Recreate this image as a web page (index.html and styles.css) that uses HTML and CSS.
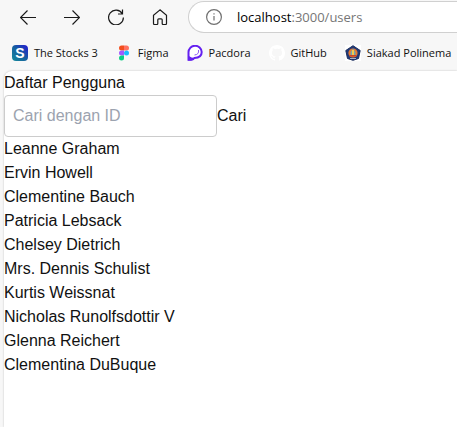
FILE: index.html
```html
<!DOCTYPE html>
<html lang="id">
<head>
<meta charset="utf-8">
<meta name="viewport" content="width=device-width, initial-scale=1">
<title>Daftar Pengguna</title>
<link rel="stylesheet" href="styles.css">
</head>
<body>
<header class="browser">
  <div class="toolbar">
    <nav class="nav-buttons" aria-label="Navigasi">
      <button type="button" class="icon-button" aria-label="Back">
        <svg class="icon" viewBox="0 0 16 16"><path d="M16 8.500H.8M7.500 1.500l-7 7 7 7"/></svg>
      </button>
      <button type="button" class="icon-button" aria-label="Forward">
        <svg class="icon" viewBox="0 0 16 16"><path d="M0 8.500H15.200M8.500 1.500l7 7-7 7"/></svg>
      </button>
      <button type="button" class="icon-button" aria-label="Refresh">
        <svg class="icon" viewBox="0 0 16 16"><path d="M15.400 8.500A7.400 7.400 0 1 1 14.300 4.600M14.500.500v4.500H10"/></svg>
      </button>
      <button type="button" class="icon-button" aria-label="Home">
        <svg class="icon" viewBox="0 0 16 16"><path d="M8 .900 1.500 6.300v8.200q0 1 1 1h2.300q1 0 1-1v-3.700q0-1 1-1h2.400q1 0 1 1v3.700q0 1 1 1h2.300q1 0 1-1V6.300z"/></svg>
      </button>
    </nav>
    <div class="address">
      <svg class="icon info" viewBox="0 0 16 16"><circle cx="8" cy="8" r="7.400"/><path d="M8 7v4.500M8 4.200v1.400"/></svg>
      <span class="url"><span class="host">localhost</span>:3000/users</span>
    </div>
  </div>
  <nav class="bookmarks" aria-label="Bookmark">
    <a class="bookmark" href="#stocks">
      <svg class="favicon" viewBox="0 0 16 16">
        <defs><linearGradient id="stocks" x1="0" y1="1" x2="1" y2="0"><stop offset="0" stop-color="#148b9b"/><stop offset=".5" stop-color="#17609f"/><stop offset="1" stop-color="#2418d4"/></linearGradient></defs>
        <rect width="16" height="16" rx="4" fill="url(#stocks)"/>
        <text class="stocks-letter" x="8" y="13" text-anchor="middle">S</text>
      </svg>
      The Stocks 3
    </a>
    <a class="bookmark" href="#figma">
      <svg class="favicon" viewBox="0 0 16 16">
        <path fill="#f24e1e" d="M8 .500H5.500a2.500 2.500 0 0 0 0 5H8z"/>
        <path fill="#ff7262" d="M8 .500h2.500a2.500 2.500 0 0 1 0 5H8z"/>
        <path fill="#a259ff" d="M8 5.500H5.500a2.500 2.500 0 0 0 0 5H8z"/>
        <circle fill="#1abcfe" cx="10.500" cy="8" r="2.500"/>
        <path fill="#0acf83" d="M8 10.500H5.500A2.500 2.500 0 1 0 8 13z"/>
      </svg>
      Figma
    </a>
    <a class="bookmark" href="#pacdora">
      <svg class="favicon" viewBox="0 0 16 16">
        <path fill="#fff" stroke="#6420f0" stroke-width="2" d="M1.500 14.800V7.500A6.600 6.500 0 0 1 14.700 7C14.700 10.800 11.500 12.800 7.500 12.900Q6.500 14.800 4 14.800z"/>
        <path fill="#6420f0" d="M1 15.500V10.500L4.500 12.500l3.500.500q-1.200 2.500-3.700 2.500z"/>
        <path fill="none" stroke="#8c58f5" d="M11.500 5Q12.300 9.500 7.500 10"/>
      </svg>
      Pacdora
    </a>
    <a class="bookmark" href="#github">
      <svg class="favicon" viewBox="0 0 16 16">
        <path fill="#fff" d="M8 0C3.580 0 0 3.580 0 8c0 3.540 2.290 6.530 5.470 7.590.4.070.55-.17.55-.38 0-.19-.01-.82-.01-1.490-2.010.37-2.530-.49-2.690-.94-.09-.23-.48-.94-.82-1.130-.28-.15-.68-.52-.01-.53.63-.01 1.080.58 1.230.82.72 1.210 1.870.87 2.330.66.07-.52.28-.87.51-1.070-1.780-.2-3.640-.89-3.640-3.950 0-.87.31-1.590.82-2.150-.08-.2-.36-1.020.08-2.120 0 0 .67-.21 2.200.82A7.600 7.600 0 0 1 8 3.860c.68 0 1.360.09 2 .27 1.530-1.040 2.200-.82 2.200-.82.44 1.100.16 1.920.08 2.120.51.56.82 1.270.82 2.150 0 3.070-1.870 3.750-3.650 3.950.29.25.54.73.54 1.480 0 1.070-.01 1.930-.01 2.200 0 .21.15.46.55.38A8.010 8.010 0 0 0 16 8c0-4.420-3.580-8-8-8z"/>
      </svg>
      GitHub
    </a>
    <a class="bookmark" href="#siakad">
      <svg class="favicon" viewBox="0 0 16 16">
        <rect width="16" height="16" fill="#fff"/>
        <path fill="#203a78" stroke="#192b5c" stroke-linejoin="round" d="M8 .700 15.200 5.500 13.500 13.500 8 15.300 2.500 13.500.800 5.500z"/>
        <circle cx="8" cy="8" r="4.600" fill="#e8792d"/>
        <path fill="#76a5ad" d="M8 3.500 10.500 7v3h-5V7z"/>
        <path fill="#f5c94b" d="M7 5h2v5H7z"/>
        <path fill="#c3442d" d="M4.500 10h7v1.500h-7z"/>
        <path fill="#a9b0c5" d="M5 13h6v1H5z"/>
      </svg>
      Siakad Polinema
    </a>
  </nav>
</header>
<main class="page">
  <h1 class="title">Daftar Pengguna</h1>
  <form class="search">
    <input class="search-input" type="text" placeholder="Cari dengan ID" aria-label="Cari dengan ID">
    <button class="search-button" type="button">Cari</button>
  </form>
  <ul class="users">
    <li>Leanne Graham</li>
    <li>Ervin Howell</li>
    <li>Clementine Bauch</li>
    <li>Patricia Lebsack</li>
    <li>Chelsey Dietrich</li>
    <li>Mrs. Dennis Schulist</li>
    <li>Kurtis Weissnat</li>
    <li>Nicholas Runolfsdottir V</li>
    <li>Glenna Reichert</li>
    <li>Clementina DuBuque</li>
  </ul>
</main>
</body>
</html>
```

FILE: styles.css
```css
* {
  box-sizing: border-box;
}

body {
  display: flex;
  flex-direction: column;
  min-height: 100vh;
  margin: 0;
  overflow-x: hidden;
  background: #f7f7f7;
  color: #111;
  font: 16px/24px "Liberation Sans", Arial, sans-serif;
}

button {
  margin: 0;
  padding: 0;
  border: 0;
  background: none;
  color: inherit;
  font: inherit;
}

.browser {
  font-family: "Open Sans", "Noto Sans", sans-serif;
}

.toolbar {
  display: flex;
  align-items: center;
  padding-top: 1px;
}

.nav-buttons {
  display: flex;
  gap: 28px;
  padding: 0 20px;
}

.icon-button {
  display: flex;
}

.icon {
  width: 16px;
  height: 16px;
  fill: none;
  stroke: #1a1a1a;
  stroke-width: 1.2;
}

.address {
  display: flex;
  flex: 1;
  align-items: center;
  gap: 15px;
  height: 32px;
  padding-left: 17px;
  border: 1px solid #d0d0d0;
  border-right: 0;
  border-radius: 16px 0 0 16px;
  background: #fff;
}

.info {
  stroke: #707070;
}

.url {
  color: #767676;
  font-size: 13px;
}

.host {
  color: #000;
}

.bookmarks {
  display: flex;
  gap: 18px;
  height: 38px;
  padding: 2px 0 0 12px;
}

.bookmark {
  display: flex;
  flex: none;
  align-items: center;
  gap: 6px;
  color: #111;
  font-size: 11px;
  text-decoration: none;
  white-space: nowrap;
}

.favicon {
  width: 16px;
  height: 16px;
}

.stocks-letter {
  fill: #fff;
  font: bold 14px "Liberation Sans", Arial, sans-serif;
}

.page {
  flex: 1;
  margin-left: 4px;
  border-top-left-radius: 8px;
  background: #fff;
  box-shadow: 0 0 2px #bbb;
}

.title {
  margin: 0;
  font: inherit;
}

.search {
  display: flex;
  align-items: center;
}

.search-input {
  width: 213px;
  padding: 8px;
  border: 1px solid #ccc;
  border-radius: 4px;
  background: #fff;
  color: inherit;
  font: inherit;
}

.search-input::placeholder {
  color: #9ca3af;
}

.users {
  margin: 0;
  padding: 0;
  list-style: none;
}
```
